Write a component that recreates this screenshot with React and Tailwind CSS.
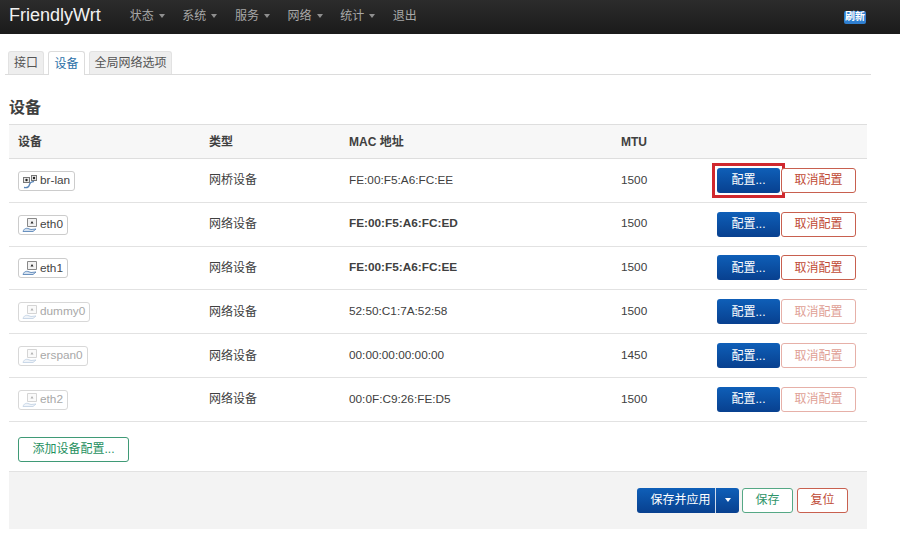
import React from "react";

const FONT = { fontFamily: '"Liberation Sans", "Noto Sans CJK SC", sans-serif' };

const devices = [
  { name: "br-lan", type: "网桥设备", mac: "FE:00:F5:A6:FC:EE", mtu: "1500", bridge: true },
  { name: "eth0", type: "网络设备", mac: "FE:00:F5:A6:FC:ED", mtu: "1500", bold: true },
  { name: "eth1", type: "网络设备", mac: "FE:00:F5:A6:FC:EE", mtu: "1500", bold: true },
  { name: "dummy0", type: "网络设备", mac: "52:50:C1:7A:52:58", mtu: "1500", off: true },
  { name: "erspan0", type: "网络设备", mac: "00:00:00:00:00:00", mtu: "1450", off: true },
  { name: "eth2", type: "网络设备", mac: "00:0F:C9:26:FE:D5", mtu: "1500", off: true },
];

const menu = ["状态", "系统", "服务", "网络", "统计"];

const Caret = ({ color = "border-t-[#8f8f8f]" }) => (
  <span className={`ml-[5px] inline-block w-0 h-0 border-x-[3.5px] border-x-transparent border-t-[4px] ${color}`} />
);

const PortIcon = ({ bridge, off }) => (
  <svg width="16" height="16" viewBox="0 0 16 16" className={off ? "opacity-35" : ""}>
    {bridge ? (
      <>
        <rect x="1.5" y="4.5" width="6" height="5" fill="#e8e8e8" stroke="#777" />
        <rect x="9.5" y="2.5" width="5" height="5" fill="#e8e8e8" stroke="#777" />
        <circle cx="4.5" cy="7" r="1.2" fill="#222" />
        <circle cx="12" cy="5" r="1.2" fill="#222" />
        <path d="M2 14.5c3 .5 5-.5 5.500-3s2.500-2.500 4.500-3" fill="none" stroke="#5a86b8" strokeWidth="1.3" />
      </>
    ) : (
      <>
        <path d="M5.500 1.500h9v8h-9z" fill="#f2f2f2" stroke="#888" />
        <path d="M8.500 6.500l1.500-2.500 1.500 2.500z" fill="#222" />
        <path d="M1 14.500c1-3 3-3.500 5-3l3 1 5-.5-3 2.500H1z" fill="#d5e1ef" stroke="#5a86b8" strokeWidth="0.9" />
      </>
    )}
  </svg>
);

const DeviceBadge = ({ name, bridge, off }) => (
  <span
    className={`flex w-fit items-center h-[20px] pl-[3px] pr-[4px] gap-[2px] border rounded-[3px] text-[11.8px] bg-white ${
      off ? "border-[#d8d8d8] text-[#a8a8a8]" : "border-[#cccccc] text-[#444]"
    }`}
  >
    <PortIcon bridge={bridge} off={off} />
    {name}
  </span>
);

const Row = ({ d, first }) => (
  <div className="flex items-center h-[43.8px] border-b border-[#e2e2e2] text-[12px] text-[#404040]">
    <div className="w-[200px] pl-[9px] pt-[1px]">
      <DeviceBadge name={d.name} bridge={d.bridge} off={d.off} />
    </div>
    <div className="w-[140px]">{d.type}</div>
    <div className={`w-[272px] text-[11.8px] ${d.bold ? "font-bold" : ""}`}>{d.mac}</div>
    <div className="w-[96px] text-[11.8px]">{d.mtu}</div>
    <div className="flex-1 flex items-center">
      <span className={`block p-[2px] -m-[2px] ${first ? "outline-[3px] outline-solid outline-[#d0282e]" : ""}`}>
        <button className="block w-[63px] h-[25px] rounded-[3px] text-[12px] text-white bg-gradient-to-b from-[#0f5fb8] to-[#08408f]">
          配置...
        </button>
      </span>
      <button
        className={`ml-[1px] w-[75px] h-[25px] rounded-[3px] border text-[12px] bg-white ${
          d.off ? "border-[#e6b0a8] text-[#e0a095]" : "border-[#c8604f] text-[#c04a35]"
        }`}
      >
        取消配置
      </button>
    </div>
  </div>
);

export default function App() {
  return (
    <div className="w-[900px] h-[556px] bg-white overflow-hidden" style={FONT}>
      <div className="h-[34px] flex items-center bg-gradient-to-b from-[#2c2c2c] to-[#1b1b1b] pr-[34px] pb-[3px]">
        <span className="ml-[9px] text-[18px] text-[#f2f2f2]">FriendlyWrt</span>
        <nav className="ml-[29px] flex items-center gap-[17.6px] text-[12px] text-[#a8a8a8]">
          {menu.map((m) => (
            <span key={m} className="flex items-center">
              {m}
              <Caret />
            </span>
          ))}
          <span>退出</span>
        </nav>
        <span className="ml-auto mt-[3px] w-[22px] h-[13px] flex items-center justify-center rounded-[2px] bg-[#2f7fd0] text-[10px] leading-none font-bold text-white">
          刷新
        </span>
      </div>

      <div className="ml-[5px] mt-[17px] w-[866px] h-[24px] flex items-end gap-[4px] border-b border-[#dcdcdc] pl-[3px] text-[12px]">
        <span className="w-[36px] h-[23px] flex items-center justify-center rounded-t-[3px] bg-[#eeeeee] border border-b-0 border-[#e2e2e2] text-[#555]">接口</span>
        <span className="w-[37px] h-[24px] flex items-center justify-center rounded-t-[3px] bg-white border border-b-0 border-[#dcdcdc] text-[#2a6fa8] -mb-px">设备</span>
        <span className="w-[83px] h-[23px] flex items-center justify-center rounded-t-[3px] bg-[#eeeeee] border border-b-0 border-[#e2e2e2] text-[#555]">全局网络选项</span>
      </div>

      <h2 className="ml-[9px] mt-[23px] h-[26px] text-[16px] leading-[20px] font-bold text-[#404040]">设备</h2>

      <div className="ml-[9px] w-[858px]">
        <div className="flex items-center h-[35px] bg-[#f7f7f7] border-y border-[#dedede] text-[12px] font-bold text-[#404040]">
          <div className="w-[200px] pl-[9px]">设备</div>
          <div className="w-[140px]">类型</div>
          <div className="w-[272px]">MAC 地址</div>
          <div className="w-[96px]">MTU</div>
        </div>
        {devices.map((d, i) => (
          <Row key={d.name} d={d} first={i === 0} />
        ))}

        <button className="block ml-[9px] mt-[15px] w-[111px] h-[25px] rounded-[3px] border border-[#3f9a76] bg-white text-[12px] text-[#1f9060]">
          添加设备配置...
        </button>

        <div className="mt-[9px] h-[58px] flex items-center justify-end pr-[19px] bg-[#f3f3f3] border-t border-[#e2e2e2]">
          <div className="flex h-[25px] rounded-[3px] overflow-hidden text-[12px] text-white bg-gradient-to-b from-[#0f5fb8] to-[#08408f]">
            <span className="w-[79px] pl-[9px] flex items-center justify-center border-r border-[#d0dcec]">保存并应用</span>
            <span className="w-[23px] pr-[5px] flex items-center justify-center">
              <Caret color="border-t-white" />
            </span>
          </div>
          <button className="ml-[3px] w-[51px] h-[25px] rounded-[3px] border border-[#55a885] bg-white text-[12px] text-[#2f9468]">保存</button>
          <button className="ml-[4px] w-[51px] h-[25px] rounded-[3px] border border-[#c8604f] bg-white text-[12px] text-[#c04a35]">复位</button>
        </div>
      </div>
    </div>
  );
}
